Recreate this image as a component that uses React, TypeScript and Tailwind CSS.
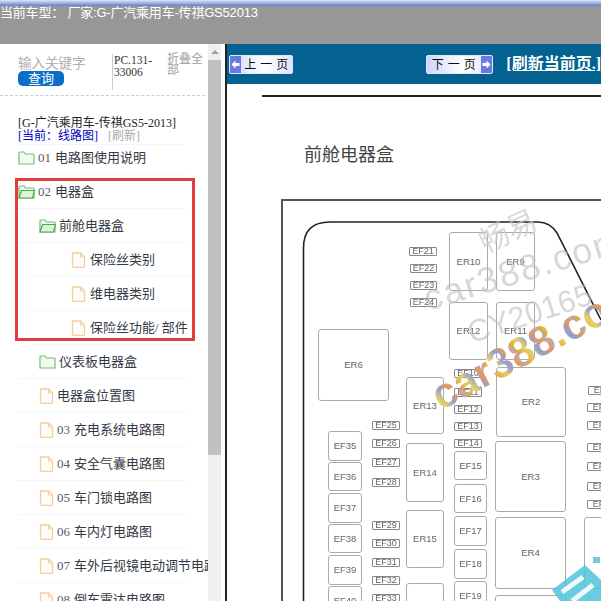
const cjk = "font-['Liberation_Serif','Noto_Sans_CJK_SC',serif]";

type Row = { label: string; depth: 1 | 2 | 3; icon: "open" | "folder" | "file"; num?: string };

const rows: Row[] = [
  { num: "01", label: "电路图使用说明", depth: 1, icon: "folder" },
  { num: "02", label: "电器盒", depth: 1, icon: "open" },
  { label: "前舱电器盒", depth: 2, icon: "open" },
  { label: "保险丝类别", depth: 3, icon: "file" },
  { label: "维电器类别", depth: 3, icon: "file" },
  { label: "保险丝功能/ 部件", depth: 3, icon: "file" },
  { label: "仪表板电器盒", depth: 2, icon: "folder" },
  { label: "电器盒位置图", depth: 2, icon: "file" },
  { num: "03", label: "充电系统电路图", depth: 2, icon: "file" },
  { num: "04", label: "安全气囊电路图", depth: 2, icon: "file" },
  { num: "05", label: "车门锁电路图", depth: 2, icon: "file" },
  { num: "06", label: "车内灯电路图", depth: 2, icon: "file" },
  { num: "07", label: "车外后视镜电动调节电路图", depth: 2, icon: "file" },
  { num: "08", label: "倒车雷达电路图", depth: 2, icon: "file" },
];

function FolderIcon({ open }: { open: boolean }) {
  return (
    <svg width="17" height="16" viewBox="0 0 17 16" fill="none" className="shrink-0">
      <path d="M1 14V3.500C1 2.700 1.500 2 2.300 2H6l1.400 2h7.600c.6 0 1 .5 1 1v9z" fill="#f1fbef" stroke="#72c06e" strokeWidth="1.200" />
      {open && <path d="M1 14l2.500-7.500H16.500L14.500 14z" fill="#dff3db" stroke="#4fa94d" strokeWidth="1.200" />}
    </svg>
  );
}

function FileIcon() {
  return (
    <svg width="15" height="16" viewBox="0 0 15 16" fill="none" className="shrink-0">
      <path d="M1.500 1h8l4 4v9.500a.8.8 0 0 1-.8.8H2.300a.8.8 0 0 1-.8-.8z" fill="#fffdf9" stroke="#f3cfa0" strokeWidth="1.300" />
      <path d="M9.500 1v4h4" stroke="#f3cfa0" strokeWidth="1.100" />
    </svg>
  );
}

function TreeRow({ row }: { row: Row }) {
  const indent = row.depth === 1 ? "pl-0" : row.depth === 2 ? "pl-[21px]" : "pl-[43px] gap-[4px]";
  const lineInset = row.depth === 3 ? "ml-[10px]" : "";
  return (
    <div className={`h-[34px] flex items-center border-b border-[#f5f5f5] w-[169px] whitespace-nowrap ${lineInset}`}>
      <div className={`flex items-center gap-[3px] ${indent}`}>
        {row.icon === "file" ? <FileIcon /> : <FolderIcon open={row.icon === "open"} />}
        <span className="text-[13px] leading-none text-[#333a45]">
          {row.num && <span className="text-[#555c68] mr-[4px]">{row.num}</span>}
          {row.label}
        </span>
      </div>
    </div>
  );
}

function Sidebar() {
  return (
    <aside className={`relative w-[208px] h-full overflow-hidden bg-white ${cjk}`}>
      <div className="flex h-[52px] pl-[18px] pt-[10px] border-b border-dashed border-[#cccccc] w-[205px]">
        <div className="w-[94px] pt-[3px]">
          <div className="text-[13.500px] leading-[14px] text-[#b0b0b0]">输入关键字</div>
          <button className="block w-[46px] h-[15px] rounded-[5px] bg-[#0b6fc9] text-white text-[13px] leading-[15px]">查询</button>
        </div>
        <div className="w-[55px] h-[36px] border-l border-[#cccccc] pl-px text-[11.500px] leading-[12px] text-[#333333]">PC.131-33006</div>
        <div className="w-[38px] text-[12px] leading-[11px] text-[#a0a0a0]">折叠全部</div>
      </div>
      <div className="pl-[18px] pt-[21px] text-[12px] leading-[13px] whitespace-nowrap">
        <div className="text-[#222222]">[G-广汽乘用车-传祺GS5-2013]</div>
        <div className="pb-[1px] border-b border-[#f5f5f5] w-[167px]">
          <span className="text-[#0000c0]">[当前：线路图]</span>
          <span className="text-[#aaaaaa] ml-[10px]">[刷新]</span>
        </div>
      </div>
      <div className="pl-[18px] mt-[-4px]">
        {rows.map((row) => (
          <TreeRow key={row.label} row={row} />
        ))}
      </div>
      <div className="absolute left-[15px] top-[134px] w-[180px] h-[163px] border-[3px] border-[#e33c3c]" />
    </aside>
  );
}

function Scrollbar() {
  return (
    <div className="w-[13px] h-full flex flex-col bg-[#f0f0f0]">
      <div className="h-[16px] flex items-center justify-center">
        <div className="w-0 h-0 border-x-[4px] border-x-transparent border-b-[4px] border-b-[#a0a0a0]" />
      </div>
      <div className="h-[395px] bg-[#c1c1c1]" />
    </div>
  );
}

function PageArrow({ dir }: { dir: "prev" | "next" }) {
  return (
    <span className="w-[11px] h-full flex items-center justify-center bg-[#6a78e0]">
      <svg width="9" height="9" viewBox="0 0 9 9" fill="#ffffff">
        <path d={dir === "prev" ? "M0.500 4.500L4.500 0.500V3H8.500V6H4.500V8.500z" : "M8.500 4.500L4.500 0.500V3H0.500V6H4.500V8.500z"} />
      </svg>
    </span>
  );
}

function PageButton({ label, dir }: { label: string; dir: "prev" | "next" }) {
  return (
    <div className="w-[67px] h-[19px] flex items-stretch rounded-[2px] border border-[#dfe6ff] bg-[linear-gradient(90deg,#cfd5fb,#ffffff_55%,#dfe3fb)] overflow-hidden">
      {dir === "prev" && <PageArrow dir="prev" />}
      <span className={`flex-1 text-center text-[12px] leading-[18px] text-[#111111] tracking-[4px] pl-[3px] whitespace-nowrap ${cjk}`}>{label}</span>
      {dir === "next" && <PageArrow dir="next" />}
    </div>
  );
}

type Box = [string, number, number, number, number];

const fuses: Box[] = [
  ["EF21", 409, 247, 28, 9], ["EF22", 410, 264, 27, 9], ["EF23", 410, 281, 27, 9], ["EF24", 410, 298, 27, 9],
  ["EF10", 454, 369, 28, 9], ["EF11", 454, 388, 28, 9], ["EF12", 454, 405, 28, 9], ["EF13", 454, 422, 28, 9], ["EF14", 454, 439, 28, 9],
  ["EF25", 372, 421, 28, 9], ["EF26", 372, 439, 28, 9], ["EF27", 372, 458, 28, 9], ["EF28", 372, 478, 28, 9],
  ["EF29", 372, 521, 28, 9], ["EF30", 372, 539, 28, 9], ["EF31", 372, 558, 28, 9], ["EF32", 372, 576, 28, 9], ["EF33", 372, 594, 28, 9],
  ["EF1", 588, 386, 28, 9], ["EF2", 587, 403, 28, 9], ["EF3", 587, 421, 28, 9], ["EF4", 587, 443, 28, 9],
  ["EF5", 587, 462, 28, 9], ["EF6", 587, 482, 28, 9], ["EF7", 587, 500, 28, 9],
];

const cells: Box[] = [
  ["EF35", 328, 431, 34, 30], ["EF36", 328, 462, 34, 29], ["EF37", 328, 493, 34, 30], ["EF38", 328, 524, 34, 29],
  ["EF39", 328, 555, 34, 30], ["EF40", 328, 586, 34, 30],
  ["EF15", 454, 451, 33, 29], ["EF16", 454, 484, 33, 29], ["EF17", 454, 516, 33, 30], ["EF18", 454, 549, 33, 30], ["EF19", 454, 581, 33, 30],
];

const relays: Box[] = [
  ["ER6", 318, 329, 71, 72], ["ER10", 449, 232, 39, 59], ["ER9", 496, 232, 39, 59], ["ER12", 449, 302, 39, 58], ["ER11", 496, 302, 39, 58],
  ["ER13", 406, 377, 38, 57], ["ER14", 406, 443, 38, 59], ["ER15", 406, 510, 38, 58], ["", 406, 583, 38, 40],
  ["ER2", 496, 367, 70, 70], ["ER3", 495, 441, 71, 71], ["ER4", 495, 517, 71, 72], ["", 495, 595, 71, 40], ["", 584, 517, 40, 72],
];

function DiagramBox({ box, variant }: { box: Box; variant: "fuse" | "cell" | "relay" }) {
  const [label, x, y, w, h] = box;
  const skin =
    variant === "fuse"
      ? "rounded-[1px] border border-[#888888] text-[9px]"
      : "rounded-[3px] border border-[#aaaaaa] text-[9.500px]";
  return (
    <div
      className={`absolute flex items-center justify-center bg-white text-[#666666] leading-none ${skin}`}
      style={{ left: x - 227, top: y - 84, width: w, height: h }}
    >
      {label}
    </div>
  );
}

function Watermarks() {
  return (
    <>
      <div className="absolute left-[250px] top-[130px] -rotate-[25deg] text-[30px] leading-none text-[#c9c9c9]/70 whitespace-nowrap font-['Noto_Sans_CJK_SC',sans-serif]">畅易</div>
      <div className="absolute left-[193px] top-[167px] -rotate-[17deg] text-[36px] leading-none tracking-[2px] text-[#bdbdbd]/60 whitespace-nowrap font-['Liberation_Sans',sans-serif]">car388.com</div>
      <div className="absolute left-[238px] top-[214px] -rotate-[18deg] text-[31px] leading-none text-[#bdbdbd]/60 whitespace-nowrap font-['Liberation_Sans',sans-serif]">CY20165</div>
      <div className="absolute left-[194px] top-[239px] -rotate-[28deg] text-[42px] leading-none font-bold whitespace-nowrap font-['Liberation_Sans',sans-serif] text-transparent bg-clip-text bg-[repeating-linear-gradient(70deg,#d9a441_0px,#e8d060_9px,#8f9fd6_17px,#e59a5a_25px,#b9a9c9_32px)]">
        car388.com
      </div>
      <svg className="absolute left-[318px] top-[471px]" width="56" height="46" viewBox="545 555 56 46">
        <path d="M552 590L585 565L601 580V601H560z" fill="#4fc3dc" opacity="0.85" />
        <path d="M593 557H600V563H593z" fill="#7fc9d8" />
        <path d="M562 592L583 577M572 601L593 585" stroke="#ffffff" strokeWidth="5" opacity="0.9" />
      </svg>
    </>
  );
}

function Diagram() {
  return (
    <div className="relative flex-1 overflow-hidden bg-white">
      <div className="absolute left-[35px] top-[11px] w-[339px] h-[2px] bg-[#222222]" />
      <div className="absolute left-[77px] top-[57px] text-[18px] leading-[24px] text-[#444444] font-['Noto_Sans_CJK_SC',sans-serif]">前舱电器盒</div>
      <div className="absolute inset-0 blur-[0.4px] font-['Liberation_Sans',sans-serif]">
        <div className="absolute left-[54px] top-[115px] w-[400px] h-[500px] border-2 border-[#555555]" />
        <svg className="absolute left-0 top-0" width="374" height="517" viewBox="227 84 374 517" fill="none">
          <path d="M303.500 601V248Q303.500 222 330 222H538Q550 222 557 233L601 320" stroke="#222222" strokeWidth="1.600" />
        </svg>
        {relays.map((b, i) => <DiagramBox key={`${b[0]}${i}`} box={b} variant="relay" />)}
        {cells.map((b) => <DiagramBox key={b[0]} box={b} variant="cell" />)}
        {fuses.map((b) => <DiagramBox key={b[0]} box={b} variant="fuse" />)}
      </div>
      <Watermarks />
    </div>
  );
}

export default function App() {
  return (
    <div className="w-[601px] h-[601px] flex flex-col overflow-hidden bg-white">
      <header className="h-[44px] shrink-0 bg-[#979797]">
        <div className="h-[6px] bg-[linear-gradient(180deg,#dfe6f7,#5f7fd0)]" />
        <div className="text-[13px] leading-[16px] -mt-px tracking-[-0.2px] text-white whitespace-nowrap font-['Liberation_Sans','Noto_Sans_CJK_SC',sans-serif]">
          当前车型： 厂家:G-广汽乘用车-传祺GS52013
        </div>
      </header>
      <div className="flex-1 min-h-0 flex">
        <Sidebar />
        <Scrollbar />
        <div className="w-[4px] bg-white" />
        <div className="w-[2px] bg-[#222222]" />
        <main className="flex-1 flex flex-col min-w-0">
          <div className="h-[40px] shrink-0 bg-[#03628f] flex items-center whitespace-nowrap overflow-hidden pl-[2px]">
            <PageButton label="上一页" dir="prev" />
            <div className="ml-[133px]"><PageButton label="下一页" dir="next" /></div>
            <span className={`ml-[13px] text-[16px] font-bold text-white underline ${cjk}`}>[刷新当前页.]</span>
          </div>
          <Diagram />
        </main>
      </div>
    </div>
  );
}
